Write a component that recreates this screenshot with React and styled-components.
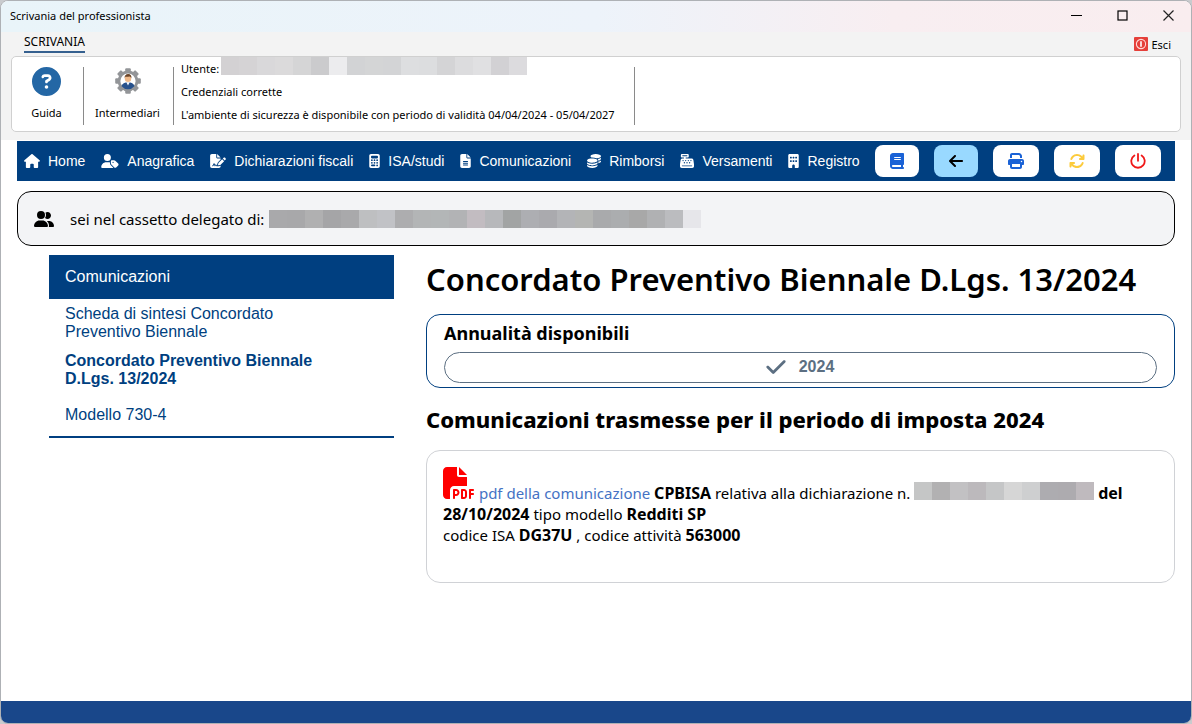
import React from "react";
import styled, { createGlobalStyle } from "styled-components";
import {
  FaArrowLeft,
  FaArrowsRotate,
  FaBook,
  FaBuilding,
  FaCalculator,
  FaCashRegister,
  FaCheck,
  FaCircleQuestion,
  FaCoins,
  FaFileLines,
  FaFilePdf,
  FaFileSignature,
  FaHouse,
  FaPrint,
  FaUserGroup,
  FaUserTag,
} from "react-icons/fa6";

const COLORS = {
  navy: "#003f80",
  footer: "#19478a",
  chrome: "#f3f3f3",
  gray: "#5c6f82",
  link: "#4472c4",
};

const UI_FONT = `"Noto Sans", "Open Sans", sans-serif`;
const ARIAL = `"Liberation Sans", Arial, sans-serif`;

const PowerIcon = () => (
  <svg viewBox="0 0 16 16" fill="none" stroke="currentColor" strokeWidth="1.8" strokeLinecap="round">
    <path d="M8 .9v6.9M4.400 2.400a6.700 6.700 0 1 0 7.200 0" />
  </svg>
);

const NAV_ITEMS = [
  { label: "Home", Icon: FaHouse, width: 16 },
  { label: "Anagrafica", Icon: FaUserTag, width: 18 },
  { label: "Dichiarazioni fiscali", Icon: FaFileSignature, width: 16 },
  { label: "ISA/studi", Icon: FaCalculator, width: 11 },
  { label: "Comunicazioni", Icon: FaFileLines, width: 11 },
  { label: "Rimborsi", Icon: FaCoins, width: 14 },
  { label: "Versamenti", Icon: FaCashRegister, width: 14 },
  { label: "Registro", Icon: FaBuilding, width: 11 },
];

const NAV_ACTIONS = [
  { label: "Guida in linea", Icon: FaBook, width: 14, color: "#1a62d6" },
  { label: "Indietro", Icon: FaArrowLeft, width: 14, color: "#000", active: true },
  { label: "Stampa", Icon: FaPrint, width: 16, color: "#1a62d6" },
  { label: "Aggiorna", Icon: FaArrowsRotate, width: 16, color: "#fccb3c" },
  { label: "Esci dal cassetto", Icon: PowerIcon, width: 16, color: "#f01818" },
];

// shades of the hidden values, one per block
const USER_MASK = [
  "#d3d1d3", "#d5d3d5", "#d9d8da", "#dbdadb", "#d5d5d6", "#cbcbcd",
  "#ececee", "#d2d3d5", "#d4d5d6", "#d3d4d6", "#dddee0", "#dcdddf",
  "#d4d4d6", "#dcdcde", "#e0e0e2", "#d2d1d4", "#dcdbde",
];
const DELEGATE_MASK = [
  "#a9a9ab", "#a8a8aa", "#b0b0b1", "#a5a5a7", "#a9a9ab", "#bebfc1",
  "#c1c2c6", "#adadaf", "#b3b5b6", "#b3b6b7", "#b2b3b5", "#c2bcc1",
  "#b7b8bb", "#a2a4a4", "#adaeb2", "#aaaaae", "#b3b4b7", "#b4b5b3",
  "#a9aaac", "#abadaf", "#a8a8a8", "#b0b1b3", "#bbbcbf", "#e6e6ea",
];
const NUMBER_MASK = [
  "#c5c6c6", "#b2b1b2", "#c2c1c3", "#bcb9bc", "#c5c6c7",
  "#d6d6d6", "#cecfd0", "#adacb0", "#adabaf", "#bfbabe",
];

const Mask = ({ shades, label }) => (
  <MaskRow role="img" aria-label={label}>
    {shades.map((shade, i) => (
      <MaskCell key={i} $shade={shade} />
    ))}
  </MaskRow>
);

const GearUser = () => (
  <svg width="26" height="26" viewBox="0 0 26 26" aria-hidden="true">
    <g fill="#939598">
      {[0, 45, 90, 135, 180, 225, 270, 315].map((a) => (
        <rect
          key={a}
          x="10.2"
          y="0.2"
          width="5.6"
          height="5"
          rx="1"
          transform={`rotate(${a} 13 13)`}
        />
      ))}
      <circle cx="13" cy="13" r="10.4" />
    </g>
    <circle cx="13" cy="13" r="7.6" fill="#fff" />
    <path
      d="M6.6 18.2c.4-2.2 2-3.2 4.2-3.6h4.4c2.2.4 3.8 1.4 4.2 3.6a8.3 8.3 0 0 1-12.8 0z"
      fill="#27518c"
    />
    <path d="M11.4 14.2h3.2L13 17.4z" fill="#fff" />
    <circle cx="13" cy="10.8" r="3.2" fill="#efb98a" />
    <path
      d="M9.6 10.6c-.3-3 1.2-4.6 3.6-4.6s3.6 1.6 3.2 4.6c-.4-1.3-1-2-1.8-2.2-1.6.4-3.6.2-4.2.3-.4.4-.7 1-.8 1.9z"
      fill="#6b4427"
    />
  </svg>
);

const App = () => {
  return (
    <>
      <GlobalStyle />
      <Window>
        <TitleBar>
          <WindowTitle>Scrivania del professionista</WindowTitle>
          <WindowControls>
            <WindowButton type="button" aria-label="Riduci a icona">
              <svg width="11" height="11" viewBox="0 0 11 11">
                <path d="M0 5.5h11" stroke="#000" />
              </svg>
            </WindowButton>
            <WindowButton type="button" aria-label="Ingrandisci">
              <svg width="11" height="11" viewBox="0 0 11 11">
                <rect x="1" y="1" width="9" height="9" fill="none" stroke="#000" strokeWidth="1.2" />
              </svg>
            </WindowButton>
            <WindowButton type="button" aria-label="Chiudi">
              <svg width="11" height="11" viewBox="0 0 11 11">
                <path d="M.5.5l10 10M10.5.5l-10 10" stroke="#222" strokeWidth="1.2" />
              </svg>
            </WindowButton>
          </WindowControls>
        </TitleBar>

        <Ribbon>
          <RibbonTabs>
            <RibbonTab type="button">SCRIVANIA</RibbonTab>
            <ExitButton type="button">
              <svg width="14" height="14" viewBox="0 0 14 14" aria-hidden="true">
                <rect width="14" height="14" rx="1" fill="#e5403a" />
                <circle cx="7" cy="7" r="4.6" fill="none" stroke="#ffd9d6" strokeWidth="1.1" />
                <path d="M7 4.2v5.6" stroke="#fff" strokeWidth="1.6" />
              </svg>
              Esci
            </ExitButton>
          </RibbonTabs>
          <RibbonPanel>
            <RibbonButton type="button" $width={71}>
              <RibbonIcon>
                <FaCircleQuestion size={29} color="#2467a5" />
              </RibbonIcon>
              Guida
            </RibbonButton>
            <RibbonDivider />
            <RibbonButton type="button" $width={89}>
              <RibbonIcon>
                <GearUser />
              </RibbonIcon>
              Intermediari
            </RibbonButton>
            <RibbonDivider />
            <SessionInfo>
              <SessionLine>
                Utente: <Mask shades={USER_MASK} label="utente nascosto" />
              </SessionLine>
              <SessionLine>Credenziali corrette</SessionLine>
              <SessionLine>
                L'ambiente di sicurezza è disponibile con periodo di validità 04/04/2024 - 05/04/2027
              </SessionLine>
            </SessionInfo>
            <RibbonDivider />
          </RibbonPanel>
        </Ribbon>

        <Page>
          <NavBar>
            <NavList>
              {NAV_ITEMS.map(({ label, Icon, width }) => (
                <li key={label}>
                  <NavLink href="#">
                    <IconBox $width={width} $height={14}>
                      <Icon />
                    </IconBox>
                    {label}
                  </NavLink>
                </li>
              ))}
            </NavList>
            <NavActions>
              {NAV_ACTIONS.map(({ label, Icon, width, color, active }) => (
                <ActionButton
                  key={label}
                  type="button"
                  aria-label={label}
                  $color={color}
                  $active={active}
                >
                  <IconBox $width={width} $height={16}>
                    <Icon />
                  </IconBox>
                </ActionButton>
              ))}
            </NavActions>
          </NavBar>

          <DelegateBar>
            <IconBox $width={20} $height={16}>
              <FaUserGroup />
            </IconBox>
            <DelegateText>
              sei nel cassetto delegato di:
              <Mask shades={DELEGATE_MASK} label="nominativo nascosto" />
            </DelegateText>
          </DelegateBar>

          <Columns>
            <SideMenu>
              <SideTitle>Comunicazioni</SideTitle>
              <SideList>
                <li>
                  <SideLink href="#">Scheda di sintesi Concordato Preventivo Biennale</SideLink>
                </li>
                <li>
                  <SideLink href="#" $current>
                    Concordato Preventivo Biennale D.Lgs. 13/2024
                  </SideLink>
                </li>
                <li>
                  <SideLink href="#">Modello 730-4</SideLink>
                </li>
              </SideList>
            </SideMenu>

            <Content>
              <PageTitle>Concordato Preventivo Biennale D.Lgs. 13/2024</PageTitle>
              <YearPanel>
                <YearTitle>Annualità disponibili</YearTitle>
                <YearButton type="button">
                  <FaCheck />
                  2024
                </YearButton>
              </YearPanel>
              <SectionTitle>Comunicazioni trasmesse per il periodo di imposta 2024</SectionTitle>
              <Card>
                <PdfLink href="#">
                  <FaFilePdf /> pdf della comunicazione
                </PdfLink>{" "}
                <b>CPBISA</b> relativa alla dichiarazione n.{" "}
                <Mask shades={NUMBER_MASK} label="numero nascosto" /> <b>del 28/10/2024</b>{" "}
                tipo modello <b>Redditi SP</b>
                <br />
                codice ISA <b>DG37U</b> , codice attività <b>563000</b>
              </Card>
            </Content>
          </Columns>
        </Page>
        <Footer />
      </Window>
    </>
  );
};

const GlobalStyle = createGlobalStyle`
  *, *::before, *::after {
    box-sizing: border-box;
  }

  body {
    margin: 0;
    background: #c9cbce;
    color: #000;
    font-family: ${UI_FONT};
  }

  button {
    border: 0;
    padding: 0;
    background: none;
    color: inherit;
    font: inherit;
    cursor: pointer;
  }

  ul {
    margin: 0;
    padding: 0;
    list-style: none;
  }
`;

const Window = styled.div`
  display: flex;
  flex-direction: column;
  min-height: 100vh;
  border: 1px solid #aeb1b5;
  border-radius: 8px;
  background: #fff;
  overflow: hidden;
`;

const TitleBar = styled.header`
  display: flex;
  justify-content: space-between;
  height: 31px;
  background: linear-gradient(90deg, #e9f4f9 0%, #edf3fa 50%, #f8eef1 75%, #f9edef 100%);
`;

const WindowTitle = styled.div`
  padding-left: 9px;
  font-size: 11px;
  line-height: 30px;
`;

const WindowControls = styled.div`
  display: flex;
`;

const WindowButton = styled.button`
  display: flex;
  align-items: center;
  justify-content: center;
  width: 46px;
  height: 28px;
`;

const Ribbon = styled.section`
  padding: 0 10px 8px;
  background: ${COLORS.chrome};
  font-size: 11px;
`;

const RibbonTabs = styled.div`
  display: flex;
  justify-content: space-between;
  height: 24px;
  padding: 0 10px 0 13px;
`;

const RibbonTab = styled.button`
  height: 21px;
  border-bottom: 2px solid #35608f;
  font-size: 12px;
  line-height: 19px;
`;

const ExitButton = styled.button`
  display: flex;
  align-items: center;
  gap: 3px;
`;

const RibbonPanel = styled.div`
  display: flex;
  height: 76px;
  border: 1px solid #d0d0d0;
  border-radius: 5px;
  background: #fff;
`;

const RibbonButton = styled.button`
  display: flex;
  flex-direction: column;
  align-items: center;
  width: ${({ $width }) => $width}px;
  padding: 10px 2px 0 0;
  line-height: 16px;
`;

const RibbonIcon = styled.span`
  display: flex;
  align-items: center;
  height: 28px;
  margin-bottom: 10px;
`;

const RibbonDivider = styled.div`
  width: 1px;
  margin: 10px 0 6px;
  background: #8a8a8a;
`;

const SessionInfo = styled.div`
  min-width: 460px;
  padding: 0 10px 0 7px;
`;

const SessionLine = styled.div`
  display: flex;
  gap: 2px;
  height: 23px;
  line-height: 23px;
  white-space: nowrap;
`;

const MaskRow = styled.span`
  display: inline-flex;
  vertical-align: -1px;
`;

const MaskCell = styled.span`
  width: 18px;
  height: 18px;
  background: ${({ $shade }) => $shade};
`;

const IconBox = styled.span`
  display: flex;
  width: ${({ $width }) => $width}px;
  height: ${({ $height }) => $height}px;

  svg {
    width: 100%;
    height: 100%;
  }
`;

const Page = styled.div`
  flex: 1;
  padding: 1px 16px 32px;
`;

const NavBar = styled.nav`
  display: flex;
  align-items: center;
  justify-content: space-between;
  min-height: 40px;
  padding: 0 14px 0 7px;
  background: ${COLORS.navy};
`;

const NavList = styled.ul`
  display: flex;
  gap: 16px;
`;

const NavLink = styled.a`
  display: flex;
  align-items: center;
  gap: 8px;
  color: #fff;
  font-family: ${ARIAL};
  font-size: 14px;
  text-decoration: none;
  white-space: nowrap;
`;

const NavActions = styled.div`
  display: flex;
  gap: 15px;
`;

const ActionButton = styled.button`
  display: flex;
  align-items: center;
  height: 32px;
  padding: 0 15px;
  border-radius: 8px;
  background: ${({ $active }) => ($active ? "#99d9ff" : "#fff")};
  color: ${({ $color }) => $color};
`;

const DelegateBar = styled.div`
  display: flex;
  align-items: center;
  gap: 16px;
  min-height: 55px;
  margin-top: 10px;
  padding: 0 16px;
  border: 1px solid #000;
  border-radius: 14px;
  background: #f3f4f6;
`;

const DelegateText = styled.div`
  display: flex;
  align-items: center;
  gap: 5px;
  font-size: 15px;
`;

const Columns = styled.div`
  display: grid;
  grid-template-columns: minmax(0, 345px) minmax(0, 1fr);
  align-items: start;
  gap: 32px;
  padding: 9px 0 0 32px;
`;

const SideMenu = styled.aside`
  border-bottom: 2px solid ${COLORS.navy};
  font-family: ${ARIAL};
  font-size: 16px;
  line-height: 18px;
`;

const SideTitle = styled.div`
  padding: 13px 16px;
  background: ${COLORS.navy};
  color: #fff;
`;

const SideList = styled.ul`
  display: flex;
  flex-direction: column;
  gap: 11px;
  padding: 6px 64px 12px 16px;

  li:last-child {
    margin-top: 7px;
  }
`;

const SideLink = styled.a`
  display: block;
  color: ${COLORS.navy};
  font-weight: ${({ $current }) => ($current ? 700 : 400)};
  text-decoration: none;
`;

const Content = styled.main`
  min-width: 0;
`;

const PageTitle = styled.h1`
  margin: 0 0 11px;
  font-size: 31px;
  font-weight: 600;
  line-height: 48px;
`;

const YearPanel = styled.section`
  padding: 6px 17px 4px;
  border: 1px solid ${COLORS.navy};
  border-radius: 14px;
`;

const YearTitle = styled.h2`
  margin: 0 0 7px;
  font-size: 18px;
  font-weight: 700;
  line-height: 24px;
`;

const YearButton = styled.button`
  display: flex;
  align-items: center;
  justify-content: center;
  gap: 12px;
  width: 100%;
  height: 31px;
  padding: 0 2px 2px 0;
  border: 1px solid ${COLORS.gray};
  border-radius: 16px;
  color: ${COLORS.gray};
  font-family: ${ARIAL};
  font-size: 16px;
  font-weight: 700;

  svg {
    width: 22px;
    height: 22px;
  }
`;

const SectionTitle = styled.h2`
  margin: 15px 0;
  font-size: 22px;
  font-weight: 800;
  line-height: 32px;
`;

const Card = styled.section`
  min-height: 133px;
  padding: 16px;
  border: 1px solid #d0d2d6;
  border-radius: 14px;
  font-size: 15px;
  line-height: 21px;

  b {
    font-size: 16px;
  }
`;

const PdfLink = styled.a`
  color: ${COLORS.link};
  text-decoration: none;

  svg {
    width: 32px;
    height: 32px;
    color: #f00;
    vertical-align: baseline;
  }
`;

const Footer = styled.footer`
  height: 22px;
  background: ${COLORS.footer};
`;

export default App;
